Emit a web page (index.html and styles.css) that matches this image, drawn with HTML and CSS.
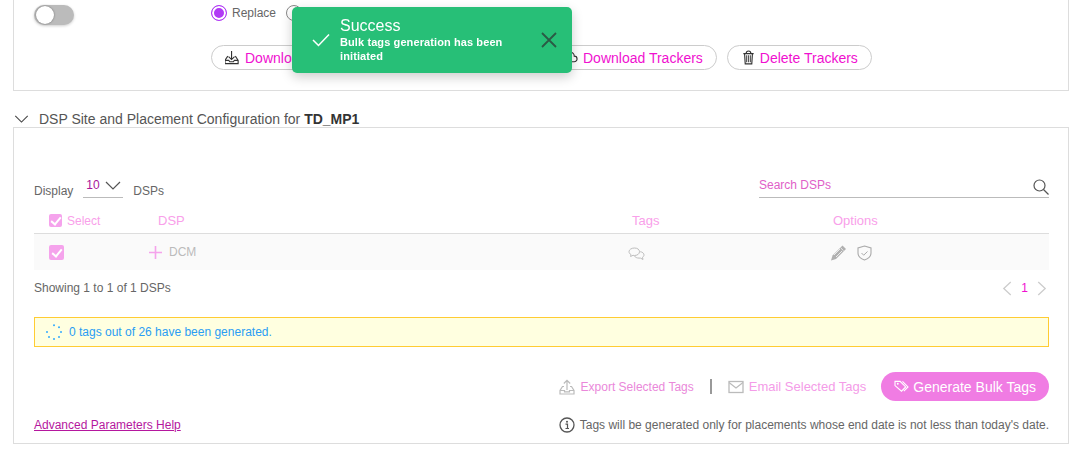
FILE: index.html
```html
<!DOCTYPE html>
<html lang="en">
<head>
    <meta charset="UTF-8">
    <title>DSP Tags</title>
    <link rel="stylesheet" href="styles.css">
</head>
<body>
    <div class="top-card">
        <div class="switch"><span class="knob"></span></div>
        <div class="top-options">
            <div class="radio-row">
                <label class="radio-item"><span class="radio on"></span>Replace</label>
                <label class="radio-item"><span class="radio"></span>Append</label>
            </div>
            <div class="btn-row">
                <button class="btn btn-wide">
                    <svg class="btn-icon" viewBox="0 0 16 16"><path d="M7 1v9M3.800 7 7 10.200 10.200 7M3 6.500 0 11v3.500h14V11l-3-4.500M0 11h4l1 1.500h4l1-1.500h4" fill="none" stroke="#333" stroke-width="1.200"/></svg>
                    Download Site and Placement
                </button>
                <button class="btn">
                    <svg class="btn-icon" viewBox="0 0 16 16"><path d="M4 12.500a3 3 0 0 1 0-6 4 4 0 0 1 8 0 3 3 0 0 1 0 6z" fill="none" stroke="#333" stroke-width="1.200"/></svg>
                    Download Trackers
                </button>
                <button class="btn btn-delete">
                    <svg class="btn-icon" viewBox="0 0 16 16"><path d="M2.500 3.800h11M5.500 3.800C5.500 1.800 6.500 1 8 1s2.500.8 2.500 2.800M3.800 3.800l.7 11h7l.7-11" fill="none" stroke="#333" stroke-width="1.200"/><path d="M6 5.500v7.500M8 5.500v7.500M10 5.500v7.500" stroke="#555" stroke-width="1.200"/></svg>
                    Delete Trackers
                </button>
            </div>
        </div>
    </div>

    <div class="section-title">
        <svg class="chevron" viewBox="0 0 16 9"><path d="M1 1l7 7 7-7" fill="none" stroke="#444" stroke-width="1.200"/></svg>
        <span>DSP Site and Placement Configuration for <b>TD_MP1</b></span>
    </div>

    <div class="card">
        <div class="toolbar">
            <div class="display">
                <span>Display</span>
                <div class="select">
                    <span class="select-val">10</span>
                    <svg class="select-arrow" viewBox="0 0 16 9"><path d="M1 1l7 7 7-7" fill="none" stroke="#555" stroke-width="1.200"/></svg>
                </div>
                <span>DSPs</span>
            </div>
            <div class="search">
                <span class="search-text">Search DSPs</span>
                <svg class="search-icon" viewBox="0 0 16 16"><circle cx="6.500" cy="6.500" r="5.500" fill="none" stroke="#555" stroke-width="1.200"/><path d="M10.500 10.500 15.500 15.500" stroke="#555" stroke-width="1.300"/></svg>
            </div>
        </div>

        <div class="table-head">
            <div class="select-head"><span class="check check-sm"></span>Select</div>
            <div class="head-big">DSP</div>
            <div class="head-big">Tags</div>
            <div class="head-big">Options</div>
        </div>
        <div class="table-row">
            <div><span class="check"></span></div>
            <div class="dsp-cell">
                <svg class="plus" viewBox="0 0 13 13"><path d="M6.500 0v13M0 6.500h13" stroke="#f5a3ec" stroke-width="1.600"/></svg>
                DCM
            </div>
            <div class="tags-cell">
                <svg class="row-icon" viewBox="0 0 17 14"><path d="M6.500 1C3.500 1 1 2.600 1 4.700c0 1.200.8 2.200 2 2.900L2.600 9.500 5 8.300c.5.100 1 .2 1.500.2 3 0 5-1.700 5-3.800S9.500 1 6.500 1z" fill="none" stroke="#b5b5b5" stroke-width=".9"/><path d="M12.200 4.700c2.200.3 3.800 1.600 3.800 3.200 0 1-.6 1.800-1.500 2.400l.5 2.200-2.500-1.400h-1.500c-2 0-3.800-.8-4.500-2" fill="none" stroke="#b5b5b5" stroke-width=".9"/></svg>
            </div>
            <div class="options-cell">
                <svg class="row-icon" viewBox="0 0 16 16"><path d="M12 .5 15.500 4 5.500 14 .5 15.500 2 10.500z" fill="#b0b0b0"/><path d="M10.300 3 13 5.700M3.500 10 9.500 4M5.500 12 11.500 6" stroke="#fafafa" stroke-width=".8"/></svg>
                <svg class="row-icon" viewBox="0 0 16 16"><path d="M8 1 14.500 3v5c0 3.500-3 5.800-6.500 7C4.500 13.800 1.500 11.500 1.500 8V3z" fill="none" stroke="#aaa" stroke-width="1.100"/><path d="M5 8l2.200 2.200L11 6.500" fill="none" stroke="#aaa"/></svg>
            </div>
        </div>

        <div class="table-foot">
            <span>Showing 1 to 1 of 1 DSPs</span>
            <div class="pager">
                <svg class="pager-arrow" viewBox="0 0 9 14"><path d="M8 1 1.500 7 8 13" fill="none" stroke="#ccc" stroke-width="1.200"/></svg>
                <span class="page-num">1</span>
                <svg class="pager-arrow" viewBox="0 0 9 14"><path d="M1 1l6.500 6L1 13" fill="none" stroke="#ccc" stroke-width="1.200"/></svg>
            </div>
        </div>

        <div class="alert">
            <svg class="spinner" viewBox="0 0 16 16" fill="#33aaff"><circle cx="8" cy="1.200" r="1"/><circle cx="13" cy="3.200" r="1"/><circle cx="15" cy="8" r="1"/><circle cx="13" cy="13" r="1"/><circle cx="8" cy="15" r="1"/><circle cx="3" cy="13" r="1"/><circle cx="1" cy="8" r="1"/></svg>
            <span>0 tags out of 26 have been generated.</span>
        </div>

        <div class="actions">
            <div class="action action-export">
                <svg class="action-icon" viewBox="0 0 16 16"><path d="M8 11V1.500M4.800 4.500 8 1.300l3.200 3.200M5 7.500H3.500L1 11.500V15h14v-3.500L12.500 7.500H11M1 11.500h4.500v1.300h5v-1.300H15" fill="none" stroke="#bbb" stroke-width="1.200"/></svg>
                Export Selected Tags
            </div>
            <span class="divider"></span>
            <div class="action action-email">
                <svg class="action-icon" viewBox="0 0 16 14"><rect x="1" y="1.500" width="14" height="11" fill="none" stroke="#bbb" stroke-width="1.300"/><path d="M1 2.500 8 8l7-5.500" fill="none" stroke="#bbb" stroke-width="1.200"/></svg>
                Email Selected Tags
            </div>
            <button class="generate">
                <svg class="generate-icon" viewBox="0 0 16 14"><path d="M1 1.500h5.500L12.500 7.500 8 12 1 6z" fill="none" stroke="#fff" stroke-width="1.200"/><path d="M9 1.500 15 7.500 10.500 12" fill="none" stroke="#fff" stroke-width="1.200"/><circle cx="4" cy="4" r="1" fill="#fff"/></svg>
                Generate Bulk Tags
            </button>
        </div>

        <div class="card-foot">
            <a class="help-link" href="#">Advanced Parameters Help</a>
            <div class="note">
                <svg class="note-icon" viewBox="0 0 16 16"><circle cx="8" cy="8" r="7" fill="none" stroke="#555" stroke-width="1.300"/><circle cx="8" cy="4.800" r="1" fill="#555"/><path d="M6.500 7.200H8.500V11.500M6.500 11.500h3.500" fill="none" stroke="#555" stroke-width="1.200"/></svg>
                Tags will be generated only for placements whose end date is not less than today's date.
            </div>
        </div>
    </div>

    <div class="toast">
        <svg class="toast-check" viewBox="0 0 18 14"><path d="M1 7l5.500 5.500L17 1.500" fill="none" stroke="#fff" stroke-width="1.500"/></svg>
        <div class="toast-body">
            <div class="toast-title">Success</div>
            <div class="toast-text">Bulk tags generation has been initiated</div>
        </div>
        <svg class="toast-close" viewBox="0 0 16 16"><path d="M1 1l14 14M15 1 1 15" stroke="#2b5a45" stroke-width="1.800"/></svg>
    </div>
</body>
</html>
```

FILE: styles.css
```css
body {
    font-family: 'Liberation Sans', Arial, sans-serif;
    font-size: 12px;
    color: #666;
    background: #fff;
    margin: 0;
    padding: 0 4px 0 13px;
    height: 450px;
    overflow: hidden;
}
button {
    font-family: inherit;
    cursor: pointer;
}
svg {
    flex: none;
    display: block;
}

/* top card */
.top-card {
    display: flex;
    height: 91px;
    box-sizing: border-box;
    border: 1px solid #ddd;
    border-top: none;
    padding: 5px 0 0 20px;
}
.switch {
    width: 40px;
    height: 20px;
    border-radius: 10px;
    background: #bbb;
    box-shadow: 0 1px 3px rgba(0, 0, 0, 0.2);
    padding: 1px 2px;
    box-sizing: border-box;
}
.knob {
    display: block;
    width: 18px;
    height: 18px;
    border-radius: 50%;
    background: #fff;
    box-shadow: 0 0 2px #666;
}
.top-options {
    margin-left: 137px;
}
.radio-row {
    display: flex;
    gap: 10px;
    height: 16px;
}
.radio-item {
    display: flex;
    align-items: center;
    gap: 5px;
}
.radio {
    width: 16px;
    height: 16px;
    box-sizing: border-box;
    border: 1px solid #888;
    border-radius: 50%;
    background: #fff;
}
.radio.on {
    border-color: #b13af5;
    background: #b13af5;
    box-shadow: inset 0 0 0 2px #fff;
}
.btn-row {
    display: flex;
    gap: 10px;
    margin-top: 24px;
}
.btn {
    display: flex;
    align-items: center;
    gap: 5px;
    height: 25px;
    padding: 0 13px;
    font-size: 14px;
    color: #f010d0;
    background: #fff;
    border: 1px solid #ccc;
    border-radius: 13px;
}
.btn-wide {
    width: 328px;
}
.btn-delete {
    gap: 4px;
}
.btn-icon {
    width: 15px;
    height: 15px;
}

/* section title */
.section-title {
    display: flex;
    align-items: center;
    gap: 10px;
    height: 36px;
    padding: 20px 0 0 1px;
    font-size: 14px;
    color: #555;
    box-sizing: border-box;
}
.section-title b {
    color: #333;
}
.chevron {
    width: 15px;
    height: 8px;
}

/* main card */
.card {
    box-sizing: border-box;
    height: 317px;
    border: 1px solid #ddd;
    padding: 48px 19px 0 20px;
}
.toolbar {
    display: flex;
    justify-content: space-between;
    height: 22px;
}
.display {
    display: flex;
    gap: 10px;
    padding-top: 8px;
}
.select {
    display: flex;
    align-items: flex-start;
    gap: 5px;
    width: 40px;
    height: 22px;
    box-sizing: border-box;
    margin-top: -8px;
    padding: 2px 0 0 3px;
    border-bottom: 1px solid #bbb;
}
.select-val {
    color: #a8149a;
}
.select-arrow {
    width: 16px;
    height: 9px;
    margin-top: 3px;
}
.search {
    display: flex;
    justify-content: space-between;
    width: 290px;
    height: 22px;
    box-sizing: border-box;
    padding-top: 2px;
    border-bottom: 1px solid #bbb;
}
.search-text {
    color: #e060c8;
}
.search-icon {
    width: 16px;
    height: 16px;
    margin-top: 1px;
}

/* table */
.table-head,
.table-row {
    display: grid;
    grid-template-columns: 109px 474px 201px 1fr;
    align-items: center;
    padding-left: 15px;
}
.table-head {
    height: 36px;
    box-sizing: border-box;
    border-bottom: 1px solid #ddd;
    color: #f9a0ea;
    padding-top: 10px;
    font-size: 12px;
}
.head-big {
    font-size: 13px;
}
.select-head {
    display: flex;
    align-items: center;
    gap: 5px;
}
.check {
    display: block;
    width: 15px;
    height: 15px;
    border-radius: 2px;
    background: #f5a3ec;
    position: relative;
}
.check::after {
    content: "";
    position: absolute;
    left: 5px;
    top: 2px;
    width: 4px;
    height: 8px;
    border: solid #fff;
    border-width: 0 2px 2px 0;
    transform: rotate(40deg);
}
.check-sm {
    width: 13px;
    height: 13px;
}
.check-sm::after {
    left: 4px;
    top: 1px;
}
.table-row {
    height: 36px;
    background: #fafafa;
}
.dsp-cell {
    display: flex;
    align-items: center;
    gap: 7px;
    margin-left: -9px;
    color: #bbb;
}
.plus {
    width: 13px;
    height: 13px;
}
.tags-cell {
    margin: 3px 0 0 -4px;
}
.options-cell {
    display: flex;
    gap: 9px;
    margin: 2px 0 0 -3px;
}
.row-icon {
    width: 17px;
    height: 16px;
}
.table-foot {
    display: flex;
    justify-content: space-between;
    align-items: center;
    height: 34px;
    padding-top: 2px;
    box-sizing: border-box;
}
.pager {
    display: flex;
    align-items: center;
    gap: 9px;
    padding-right: 2px;
}
.pager-arrow {
    width: 10px;
    height: 15px;
}
.page-num {
    color: #f010d0;
}

/* progress alert */
.alert {
    display: flex;
    align-items: center;
    gap: 7px;
    height: 30px;
    box-sizing: border-box;
    margin-top: 13px;
    padding-left: 11px;
    background: #ffffe0;
    border: 1px solid #fc3;
    color: #2a9df4;
}
.spinner {
    width: 16px;
    height: 16px;
}

/* actions */
.actions {
    display: flex;
    justify-content: flex-end;
    align-items: center;
    height: 29px;
    margin-top: 25px;
}
.action {
    display: flex;
    align-items: center;
    gap: 5px;
    color: #f49ce8;
}
.action-export {
    gap: 6px;
    color: #ea88da;
}
.action-email {
    font-size: 13px;
}
.action-icon {
    width: 16px;
    height: 16px;
}
.divider {
    width: 2px;
    height: 15px;
    margin: 0 16px;
    background: #999;
}
.generate {
    display: flex;
    align-items: center;
    gap: 4px;
    height: 29px;
    margin-left: 15px;
    padding: 0 13px;
    border: none;
    border-radius: 15px;
    background: #f07ce3;
    color: #fff;
    font-size: 14px;
}
.generate-icon {
    width: 15px;
    height: 13px;
}
.card-foot {
    display: flex;
    justify-content: space-between;
    align-items: center;
    margin-top: 16px;
}
.help-link {
    color: #b5179e;
}
.note {
    display: flex;
    align-items: center;
    gap: 5px;
}
.note-icon {
    width: 16px;
    height: 16px;
}

/* toast sits over the page */
.toast {
    position: fixed;
    left: 292px;
    top: 7px;
    width: 280px;
    height: 66px;
    box-sizing: border-box;
    display: flex;
    align-items: center;
    padding: 0 15px 0 20px;
    background: #27bf77;
    border-radius: 5px;
    box-shadow: 0 4px 12px rgba(0, 0, 0, 0.2);
    color: #fff;
}
.toast-check {
    width: 18px;
    height: 14px;
}
.toast-body {
    flex: 1;
    margin: -2px 0 0 10px;
}
.toast-title {
    font-size: 16px;
    line-height: 19px;
}
.toast-text {
    font-size: 11px;
    font-weight: bold;
    line-height: 14px;
    width: 180px;
    letter-spacing: 0.1px;
}
.toast-close {
    width: 16px;
    height: 16px;
}
```
